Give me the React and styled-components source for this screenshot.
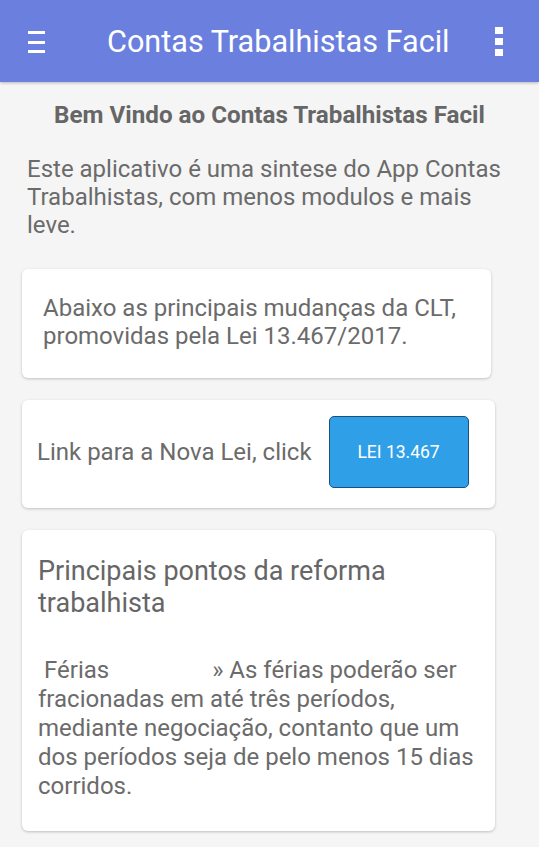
import React from "react"
import styled, { createGlobalStyle } from "styled-components"

const GlobalStyle = createGlobalStyle`
  html, body {
    margin: 0;
    padding: 0;
    background: #f5f5f5;
    font-family: Roboto, "Liberation Sans", sans-serif;
  }
`

const Page = styled.div`
  width: 539px;
  min-height: 847px;
  background: #f5f5f5;
  overflow: hidden;
`

const AppBar = styled.header`
  height: 82px;
  background: #6b7fde;
  display: flex;
  align-items: center;
  padding: 0 36px 0 28px;
  box-shadow: 0 1px 3px rgba(0, 0, 0, 0.25);
  color: #fff;
`

const MenuIcon = styled.div`
  width: 17px;
  display: flex;
  flex-direction: column;
  gap: 6.5px;
  margin-top: 2px;
  span {
    display: block;
    height: 3px;
    background: #fff;
  }
`

const AppTitle = styled.h1`
  margin: 0 0 0 62px;
  font-size: 30.6px;
  font-weight: 400;
  white-space: nowrap;
`

const MoreIcon = styled.div`
  margin-left: auto;
  display: flex;
  flex-direction: column;
  gap: 4px;
  span {
    display: block;
    width: 8px;
    height: 7px;
    background: #fff;
  }
`

const Content = styled.main`
  padding: 19px 44px 20px 22px;
  color: #6b6b6b;
`

const Welcome = styled.h2`
  margin: 0 -22px 0 0;
  text-align: center;
  font-size: 24.2px;
  line-height: 28px;
  font-weight: 700;
  color: #666;
`

const Intro = styled.p`
  margin: 26px -18px 30px 5px;
  font-size: 24px;
  line-height: 28px;
`

const Card = styled.section`
  background: #fff;
  border-radius: 6px;
  box-shadow: 0 1px 3px rgba(0, 0, 0, 0.22);
  margin-right: ${(p) => (p.narrow ? "4px" : "0")};
  margin-bottom: 22px;
  padding: ${(p) => p.pad};
`

const CardText = styled.p`
  margin: 0;
  font-size: 24px;
  line-height: 28px;
`

const LinkRow = styled.div`
  display: flex;
  align-items: center;
  gap: 17px;
`

const LawButton = styled.button`
  flex: none;
  width: 140px;
  height: 72px;
  background: #2f9fe8;
  border: 1px solid #1d4f7b;
  border-radius: 5px;
  color: #fff;
  font-family: Roboto, "Liberation Sans", sans-serif;
  font-size: 17.5px;
`

const CardHeading = styled.h3`
  margin: 0 0 37px;
  font-size: 27px;
  line-height: 32px;
  font-weight: 400;
  color: #666;
`

const Point = styled.p`
  margin: 0;
  font-size: 24px;
  line-height: 29px;
`

const PointLabel = styled.span`
  margin-left: 6px;
  margin-right: 103px;
`

export default function App() {
  return (
    <Page>
      <GlobalStyle />
      <AppBar>
        <MenuIcon>
          <span />
          <span />
          <span />
        </MenuIcon>
        <AppTitle>Contas Trabalhistas Facil</AppTitle>
        <MoreIcon>
          <span />
          <span />
          <span />
        </MoreIcon>
      </AppBar>
      <Content>
        <Welcome>Bem Vindo ao Contas Trabalhistas Facil</Welcome>
        <Intro>
          Este aplicativo é uma sintese do App Contas Trabalhistas, com menos
          modulos e mais leve.
        </Intro>
        <Card narrow pad="25px 20px 28px 21px">
          <CardText>
            Abaixo as principais mudanças da CLT, promovidas pela Lei
            13.467/2017.
          </CardText>
        </Card>
        <Card pad="16px 20px 20px 15px">
          <LinkRow>
            <CardText>Link para a Nova Lei, click</CardText>
            <LawButton>LEI 13.467</LawButton>
          </LinkRow>
        </Card>
        <Card pad="25px 16px 30px 16px">
          <CardHeading>Principais pontos da reforma trabalhista</CardHeading>
          <Point>
            <PointLabel>Férias</PointLabel>» As férias poderão ser
            fracionadas em até três períodos, mediante negociação, contanto
            que um dos períodos seja de pelo menos 15 dias corridos.
          </Point>
        </Card>
      </Content>
    </Page>
  )
}
